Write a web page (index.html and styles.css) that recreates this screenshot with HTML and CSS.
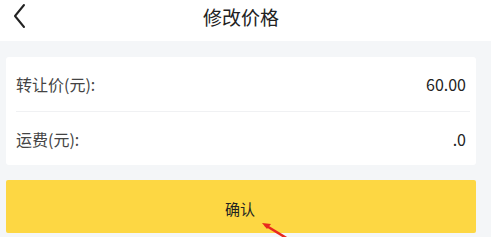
FILE: index.html
```html
<html>
<head>
  <meta charset="utf-8">
  <link rel="stylesheet" href="styles.css">
</head>
<body>
  <div class="top-bar">
    <svg class="back" width="16" height="26" viewBox="0 0 16 26">
      <path d="M12 2 L3 13 L12 24" fill="none" stroke="#222" stroke-width="2" stroke-linecap="round" stroke-linejoin="round"/>
    </svg>
    <h2>修改价格</h2>
  </div>
  <div class="content">
    <div class="price-card">
      <div class="row">
        <span class="label">转让价(元):</span>
        <span class="value">60.00</span>
      </div>
      <div class="row">
        <span class="label">运费(元):</span>
        <span class="value">.0</span>
      </div>
    </div>
    <button class="confirm">确认</button>
  </div>
  <svg class="arrow" width="40" height="30" viewBox="0 0 40 30">
    <path d="M28 30 L5 16" stroke="#e8281e" stroke-width="2.5" fill="none"/>
    <path d="M2 14 L11 15 L7 20 Z" fill="#e8281e"/>
  </svg>
</body>
</html>
```

FILE: styles.css
```css
html, body {
  height: 100%;
}
body {
  margin: 0;
  padding: 0;
  background: #fff;
  font-family: "Noto Sans CJK SC", "Noto Sans", sans-serif;
  color: #333;
  overflow: hidden;
  position: relative;
}

.top-bar {
  height: 41px;
  display: flex;
  align-items: center;
  justify-content: center;
  position: relative;
}
.top-bar h2 {
  margin: 0;
  font-size: 19px;
  font-weight: 400;
  color: #222;
  margin-top: -9px;
  margin-left: -16px;
}
.top-bar .back {
  position: absolute;
  left: 12px;
  top: 3px;
}

.content {
  width: 491px;
  height: 200px;
  box-sizing: border-box;
  background: #f4f6f8;
  padding: 16px 15px 0 6px;
}

.price-card {
  background: #fff;
  border-radius: 3px;
  padding: 0 6px 0 10px;
}
.price-card .row {
  height: 54px;
  display: flex;
  align-items: center;
  justify-content: space-between;
  font-size: 16px;
}
.price-card .row + .row {
  border-top: 1px solid #f0f1f3;
  height: 53px;
}
.price-card .label {
  color: #444;
}
.price-card .value {
  color: #222;
  margin-right: 4px;
}

.confirm {
  display: block;
  width: 100%;
  height: 53px;
  margin-top: 15px;
  border: none;
  border-radius: 2px;
  background: #fdd743;
  font-family: inherit;
  font-size: 15px;
  color: #222;
  padding: 4px 0 0 0;
  text-indent: -2px;
}

.arrow {
  position: absolute;
  left: 260px;
  top: 209px;
}
```
